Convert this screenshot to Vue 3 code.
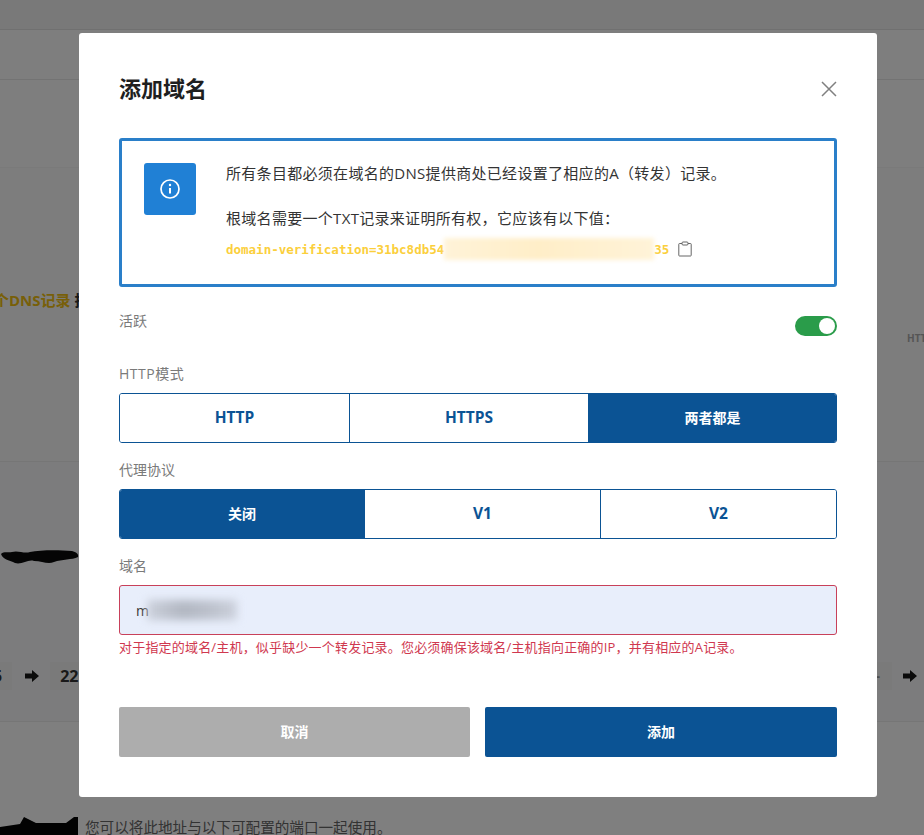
<script setup>
import { ref } from 'vue';

const httpModes = ['HTTP', 'HTTPS', '两者都是'];
const proxyModes = ['关闭', 'V1', 'V2'];
const httpMode = ref('两者都是');
const proxyMode = ref('关闭');
const active = ref(true);

// latin labels are set a little larger than the chinese ones
const isLatin = (s) => /^[\x00-\x7f]+$/.test(s);
</script>

<template>
  <div class="page">
    <header class="top-bar"></header>
    <div class="sub-bar"></div>
    <div class="filter-bar"></div>
    <section class="bg-section first">
      <div class="bg-notice">
        <span class="gold">个DNS记录</span>
        <span class="dark">拍</span>
      </div>
      <div class="bg-http">HTTP</div>
    </section>
    <section class="bg-section second">
      <svg class="scribble" width="80" height="22" viewBox="0 0 80 22">
        <path d="M1 7 C4 4 8 6 12 5 C18 3 24 7 30 5 C40 3 58 3 72 4 C76 5 79 7 78 10 C72 13 62 12 54 15 C48 18 42 14 34 14 C28 12 22 18 15 16 C10 13 3 13 1 7Z" fill="#0b0b0b" />
      </svg>
      <div class="port-row">
        <span class="port-chip left">5</span>
        <svg class="arrow" width="14" height="14" viewBox="0 0 14 14"><path d="M0 4.5H7V1L14 7L7 13V9.5H0Z" fill="#161616" /></svg>
        <span class="port-chip">22</span>
        <span class="port-spacer"></span>
        <span class="port-chip right">-</span>
        <svg class="arrow end" width="14" height="14" viewBox="0 0 14 14"><path d="M0 4.5H7V1L14 7L7 13V9.5H0Z" fill="#161616" /></svg>
      </div>
    </section>
    <footer class="bg-foot">
      <svg width="78" height="20" viewBox="0 0 78 20">
        <path d="M0 12 L20 9 L24 2 L36 8 L66 8 L74 2 L78 2 L78 20 L0 20Z" fill="#050505" />
      </svg>
      <span>您可以将此地址与以下可配置的端口一起使用。</span>
    </footer>

    <div class="overlay">
      <div class="modal">
        <div class="modal-head">
          <h2>添加域名</h2>
          <button class="close" aria-label="close">
            <svg width="18" height="18" viewBox="0 0 18 18"><path d="M2 2L16 16M16 2L2 16" stroke="#808080" stroke-width="1.5" fill="none" /></svg>
          </button>
        </div>

        <div class="info-box">
          <div class="info-icon">
            <svg width="22" height="22" viewBox="0 0 22 22" fill="none">
              <circle cx="11" cy="11" r="9" stroke="#fff" stroke-width="1.7" />
              <path d="M11 10V15.5" stroke="#fff" stroke-width="2" />
              <circle cx="11" cy="7" r="1.2" fill="#fff" />
            </svg>
          </div>
          <div class="info-text">
            <p class="line-one">所有条目都必须在域名的DNS提供商处已经设置了相应的A（转发）记录。</p>
            <p class="line-two">根域名需要一个TXT记录来证明所有权，它应该有以下值：</p>
            <div class="code-row">
              <code>domain-verification=31bc8db54</code>
              <span class="code-blur"></span>
              <code>35</code>
              <svg class="copy" width="14" height="16" viewBox="0 0 14 16" fill="none">
                <path d="M4 2.5H1.5C1 2.5 .8 2.8 .8 3.2V14.3C.8 14.8 1 15 1.5 15H12.5C13 15 13.2 14.8 13.2 14.3V3.2C13.2 2.8 13 2.5 12.5 2.5H10" stroke="#666" stroke-width="1" />
                <rect x="4" y="1" width="6" height="3" rx="1" stroke="#666" stroke-width="1" />
              </svg>
            </div>
          </div>
        </div>

        <div class="active-row">
          <label>活跃</label>
          <button class="toggle" :class="{ on: active }" @click="active = !active"><span class="knob"></span></button>
        </div>

        <label class="field-label http-label">HTTP模式</label>
        <div class="segments http-seg">
          <button v-for="m in httpModes" :key="m" :class="{ selected: httpMode === m, latin: isLatin(m) }" @click="httpMode = m">{{ m }}</button>
        </div>

        <label class="field-label">代理协议</label>
        <div class="segments proxy-seg">
          <button v-for="m in proxyModes" :key="m" :class="{ selected: proxyMode === m, latin: isLatin(m) }" @click="proxyMode = m">{{ m }}</button>
        </div>

        <label class="field-label">域名</label>
        <div class="domain-input">
          <span>m</span>
          <span class="input-blur"></span>
        </div>
        <p class="error">对于指定的域名/主机，似乎缺少一个转发记录。您必须确保该域名/主机指向正确的IP，并有相应的A记录。</p>

        <div class="actions">
          <button class="cancel">取消</button>
          <button class="submit">添加</button>
        </div>
      </div>
    </div>
  </div>
</template>

<style>
html, body {
  margin: 0;
  background: #fff;
}
</style>

<style scoped>
.page {
  position: relative;
  width: 924px;
  height: 835px;
  overflow: hidden;
  background: #fff;
  font-family: "Open Sans", "Noto Sans CJK SC", sans-serif;
}

/* page behind the dialog */
.top-bar {
  height: 30px;
  background: #f2f2f2;
  border-bottom: 1px solid #e0e0e0;
  box-sizing: border-box;
}
.sub-bar {
  height: 50px;
  border-bottom: 1px solid #e6e6e6;
  box-sizing: border-box;
  background: #fdfdfd;
}
.filter-bar {
  height: 88px;
  border-bottom: 1px solid #f4f4f4;
  box-sizing: border-box;
  background: #fdfdfd;
}
.bg-section {
  box-sizing: border-box;
  border-bottom: 1px solid #ececec;
}
.bg-section.first {
  height: 294px;
  padding-top: 122px;
  background: #fafafa;
}
.bg-notice {
  margin-left: -6px;
  font-size: 15px;
  font-weight: 700;
  line-height: 20px;
}
.gold {
  color: #f0bf10;
}
.dark {
  color: #333;
  margin-left: 4px;
}
.bg-http {
  margin: 20px 0 0 907px;
  font-size: 10px;
  font-weight: 700;
  line-height: 16px;
  color: #aaa;
}
.bg-section.second {
  height: 260px;
  padding-top: 85px;
  background: #f8f9fb;
}
.scribble {
  display: block;
}
.port-row {
  display: flex;
  align-items: center;
  margin-top: 89px;
  height: 36px;
}
.port-chip {
  display: block;
  height: 28px;
  padding: 0 10px;
  line-height: 28px;
  font-size: 16px;
  font-weight: 700;
  color: #333;
  background: #f4f4f4;
}
.port-chip.left {
  margin-left: -17px;
}
.port-chip.right {
  color: #999;
  font-size: 14px;
  padding: 0 12px 0 22px;
}
.arrow {
  margin: 0 11px 0 13px;
}
.arrow.end {
  margin: 0 7px 0 11px;
}
.port-spacer {
  flex: 1;
}
.bg-foot {
  display: flex;
  align-items: flex-end;
  gap: 7px;
  height: 113px;
  background: #fff;
  box-sizing: border-box;
  font-size: 14.6px;
  line-height: 16px;
  color: #666;
}

.overlay {
  position: absolute;
  inset: 0;
  background: rgba(0, 0, 0, 0.5);
  display: flex;
  justify-content: center;
  align-items: flex-start;
  padding: 33px 0 0 32px;
  box-sizing: border-box;
}
.modal {
  width: 798px;
  height: 764px;
  box-sizing: border-box;
  padding: 0 40px;
  background: #fff;
  border-radius: 3px;
}
button {
  font-family: inherit;
  cursor: pointer;
}

.modal-head {
  display: flex;
  justify-content: space-between;
  align-items: center;
  height: 105px;
  padding-top: 7px;
  box-sizing: border-box;
}
.modal-head h2 {
  margin: 0 0 4px;
  font-size: 22px;
  font-weight: 700;
  color: #1f1f1f;
}
.close {
  border: 0;
  background: none;
  padding: 0;
  display: flex;
  margin-right: -1px;
}

.info-box {
  display: flex;
  gap: 30px;
  height: 149px;
  box-sizing: border-box;
  padding: 22px 22px 0;
  border: 3px solid #2a7fc9;
  border-radius: 3px;
}
.info-icon {
  flex: none;
  width: 52px;
  height: 52px;
  border-radius: 3px;
  background: #2080d5;
  display: flex;
  align-items: center;
  justify-content: center;
}
.info-text {
  margin-top: -1px;
  font-size: 15px;
  letter-spacing: 0.3px;
  color: #333;
}
.info-text p {
  margin: 0;
  line-height: 22px;
}
.line-two {
  margin-top: 23px !important;
}
.code-row {
  display: flex;
  align-items: center;
  height: 22px;
  margin-top: 9px;
  letter-spacing: 0;
}
code {
  font-family: "DejaVu Sans Mono", monospace;
  font-size: 12.5px;
  font-weight: 700;
  color: #fbcf3c;
}
.code-blur {
  width: 210px;
  height: 22px;
  background: linear-gradient(90deg, #fff3d8, #ffeec8 45%, #fff3d8);
  filter: blur(2px);
}
.copy {
  margin-left: 9px;
}

.active-row {
  display: flex;
  justify-content: space-between;
  height: 41px;
  padding-top: 24px;
}
.active-row label,
.field-label {
  display: block;
  font-size: 14px;
  line-height: 20px;
  color: #7a7a7a;
}
.toggle {
  width: 42px;
  height: 20px;
  margin-top: 5px;
  padding: 2px;
  border: 0;
  border-radius: 10px;
  background: #2a9c4a;
  display: flex;
  justify-content: flex-end;
}
.knob {
  width: 16px;
  height: 16px;
  border-radius: 50%;
  background: #fff;
}
.field-label {
  margin-bottom: 9px;
}
.http-label {
  margin-top: 12px;
  letter-spacing: 0.5px;
}

.segments {
  display: grid;
  height: 50px;
  margin-bottom: 17px;
  box-sizing: border-box;
  border: 1px solid #0b5394;
  border-radius: 3px;
  overflow: hidden;
}
.http-seg {
  grid-template-columns: 229px 239px 1fr;
}
.proxy-seg {
  grid-template-columns: 244px 236px 1fr;
}
.segments button {
  border: 0;
  border-left: 1px solid #0b5394;
  background: #fff;
  color: #0b5394;
  font-size: 14px;
  font-weight: 700;
  padding: 0 0 2px;
}
.segments button.latin {
  font-size: 15.5px;
}
.segments button:first-child {
  border-left: 0;
}
.segments button.selected {
  background: #0b5394;
  color: #fff;
}

.domain-input {
  display: flex;
  align-items: center;
  height: 50px;
  box-sizing: border-box;
  padding-left: 16px;
  border: 1px solid #c8405a;
  border-radius: 3px;
  background: #e8eefb;
  font-size: 14px;
  color: #333;
}
.input-blur {
  width: 90px;
  height: 20px;
  margin-left: -2px;
  background: linear-gradient(90deg, #ccd1dc, #b2b7c2 40%, #bcc1cc 70%, #ccd1dc);
  filter: blur(4px);
}
.error {
  margin: 3px 0 0;
  font-size: 13px;
  line-height: 18px;
  letter-spacing: 0.19px;
  color: #d0384f;
}
.actions {
  display: grid;
  grid-template-columns: 351px 1fr;
  gap: 15px;
  margin-top: 51px;
}
.actions button {
  height: 50px;
  border: 0;
  border-radius: 2px;
  padding: 0 0 2px;
  color: #fff;
  font-size: 14px;
  font-weight: 700;
}
.cancel {
  background: #adadad;
}
.submit {
  background: #0b5394;
}
</style>
